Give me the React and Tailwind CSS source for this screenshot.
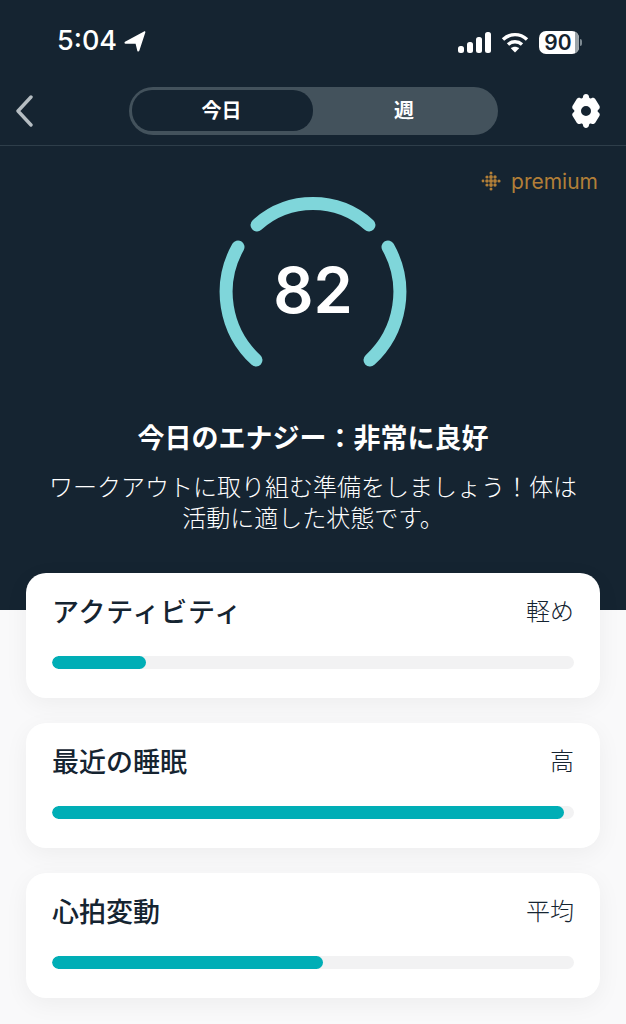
import React from "react";

const font = "font-['Inter','Noto_Sans_CJK_JP',sans-serif]";

function StatusBar() {
  return (
    <div className="h-[82px] flex items-start justify-between pl-[57px] pr-[44px] pt-[26px]">
      <div className="flex items-center gap-[7px]">
        <span className="text-[27px] leading-[30px] font-medium text-white">5:04</span>
        <svg width="22" height="21" viewBox="0 0 22 21" className="mt-[1px]"><path d="M1 10.800 20 .4c.8-.4 1.600.2 1.300 1.100L15.300 19.800c-.3 1-1.800 1-2-.1L11.600 12.700 1.500 12.800c-1 0-1.400-1.500-.5-2Z" fill="#fff" /></svg>
      </div>
      <div className="flex items-center gap-[10px] pt-[5px]">
        <svg width="33" height="21" viewBox="0 0 33 21" fill="#fff">
          <rect x="0" y="14" width="6" height="7" rx="2.5" />
          <rect x="9" y="10" width="6" height="11" rx="2.5" />
          <rect x="18" y="5" width="6" height="16" rx="2.5" />
          <rect x="27" y="0" width="6" height="21" rx="2.5" />
        </svg>
        <svg width="28" height="21" viewBox="0 0 28 21" fill="none" stroke="#fff" strokeWidth="3.4">
          <path d="M2 7.500C9 1 19 1 26 7.500" />
          <path d="M7 12.500c4-3.600 10-3.600 14 0" />
          <path d="M14 20.500 9.800 16.200c2.300-2 6-2 8.400 0Z" fill="#fff" stroke="none" />
        </svg>
        <div className="flex items-center gap-[1px]">
          <div className="w-[40px] h-[23px] rounded-[7px] bg-white flex items-center justify-center relative overflow-hidden">
            <div className="absolute right-0 top-0 bottom-0 w-[4px] bg-[#9aa3a8]" />
            <span className="relative text-[21px] leading-none font-semibold text-[#14232f] pr-[2px]">90</span>
          </div>
          <div className="w-[2px] h-[7px] rounded-r-full bg-[#7d8a92]" />
        </div>
      </div>
    </div>
  );
}

function NavBar() {
  return (
    <div className="h-[64px] flex items-start border-b border-[#2e3e4a] pl-[15px] pr-[24px] pt-[5px]">
      <svg width="20" height="32" viewBox="0 0 20 32" className="mt-[8px]" fill="none" stroke="#b5bdc2" strokeWidth="3.4" strokeLinecap="round" strokeLinejoin="round"><path d="M16 2 3 16l13 14" /></svg>
      <div className="ml-[94px] w-[369px] h-[48px] rounded-[24px] bg-[#43525c] flex p-[3px] pr-0">
        <div className="w-[181px] h-[41px] rounded-[20px] bg-[#152431] flex items-center justify-center text-white font-bold text-[20px] pr-[2px]">今日</div>
        <div className="flex-1 flex items-center justify-center text-white font-bold text-[20px] pr-[3px]">週</div>
      </div>
      <svg width="32" height="34" viewBox="0 0 32 34" className="ml-auto mt-[7px]" fill="#fff">
        <path fillRule="evenodd" d="M16 0c1.600 0 3 1.200 3 2.800 0 1.200 1.300 2 2.400 1.400 1.400-.8 3.200-.3 4 1.100l4 6.400c.8 1.400.3 3.200-1.100 4-.9.500-.9 1.900 0 2.500 1.400.8 1.900 2.500 1.100 3.900l-4 6.500c-.8 1.400-2.600 1.900-4 1.100-1.100-.6-2.400.2-2.400 1.400 0 1.600-1.400 2.900-3 2.900s-3-1.300-3-2.900c0-1.200-1.300-2-2.400-1.400-1.400.8-3.200.3-4-1.100l-4-6.500c-.8-1.400-.3-3.100 1.100-3.900.9-.6.9-2 0-2.500-1.400-.8-1.900-2.600-1.100-4l4-6.400c.8-1.400 2.600-1.900 4-1.100C11.700 4.800 13 4 13 2.800 13 1.200 14.400 0 16 0Zm0 12a5 5 0 1 0 0 10 5 5 0 0 0 0-10Z" />
      </svg>
    </div>
  );
}

function FitbitDots() {
  const dots = [
    [10, 2, 1.5], [10, 6, 1.9], [10, 10, 2], [10, 14, 1.9], [10, 18, 1.5],
    [14, 6, 1.7], [14, 10, 1.9], [14, 14, 1.7], [18, 10, 1.6],
    [6, 6, 1.6], [6, 10, 1.8], [6, 14, 1.6], [2, 10, 1.4],
  ];
  return (
    <svg width="20" height="20" viewBox="0 0 20 20" fill="#b27f38">
      {dots.map(([x, y, r], i) => <circle key={i} cx={x} cy={y} r={r} />)}
    </svg>
  );
}

function Gauge() {
  return (
    <div className="relative w-[186px] h-[186px] flex items-center justify-center">
      <svg width="186" height="186" viewBox="0 0 186 186" className="absolute inset-0 overflow-visible" fill="none" stroke="#7fd6da" strokeWidth="13" strokeLinecap="round">
        <path d="M37 28A84 84 0 0 1 149 28" />
        <path d="M36 163A92 92 0 0 1 18 50" />
        <path d="M168 50A92 92 0 0 1 150 163" />
      </svg>
      <span className="relative text-[63px] leading-none font-semibold text-white">82</span>
    </div>
  );
}

function Card({ title, value, pct, tracking = "" }) {
  return (
    <div className="h-[125px] rounded-[20px] bg-white shadow-[0_6px_24px_rgba(0,0,0,0.05)] px-[26px] pt-[23px]">
      <div className="flex items-center justify-between h-[32px]">
        <span className={`text-[27px] leading-[32px] font-medium text-[#152431] pt-[1px] ${tracking}`}>{title}</span>
        <span className="text-[24px] leading-[32px] font-light text-[#152431]">{value}</span>
      </div>
      <div className="mt-[28px] h-[13px] rounded-full bg-[#f2f2f3] overflow-hidden">
        <div className="h-full rounded-full bg-[#00aeb6]" style={{ width: `${pct}%` }} />
      </div>
    </div>
  );
}

export default function App() {
  return (
    <div className={`w-[626px] h-[1024px] bg-[#f9f9fa] overflow-hidden ${font}`}>
      <div className="h-[610px] bg-[#152431]">
        <StatusBar />
        <NavBar />
        <div className="flex justify-end pr-[28px] pt-[22px] h-[51px]">
          <div className="flex items-center gap-[10px] h-[26px]">
            <FitbitDots />
            <span className="text-[21px] leading-none text-[#b27f38]">premium</span>
          </div>
        </div>
        <div className="flex justify-center">
          <Gauge />
        </div>
        <div className="mt-[40px] text-center text-[27px] leading-[32px] font-bold text-white">今日のエナジー：非常に良好</div>
        <div className="mt-[17px] px-[48px] text-center text-[24px] leading-[31px] font-light text-white">ワークアウトに取り組む準備をしましょう！体は活動に適した状態です。</div>
      </div>
      <div className="-mt-[37px] px-[26px] flex flex-col gap-[25px]">
        <Card title="アクティビティ" value="軽め" pct={18} tracking="tracking-[0.8px]" />
        <Card title="最近の睡眠" value="高" pct={98} />
        <Card title="心拍変動" value="平均" pct={52} />
      </div>
    </div>
  );
}
